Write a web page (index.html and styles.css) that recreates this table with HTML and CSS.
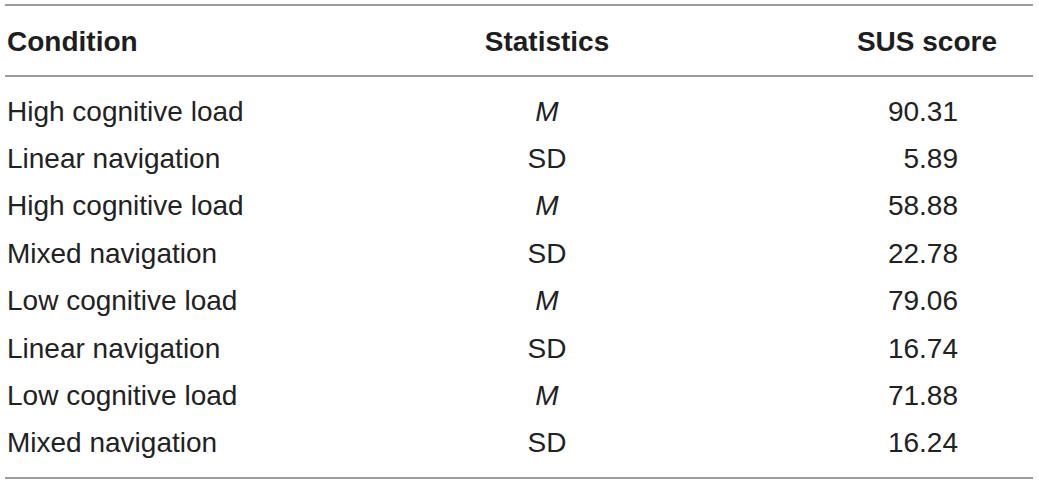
FILE: index.html
```html
<!DOCTYPE html>
<html lang="en">
<head>
<meta charset="utf-8">
<title>SUS scores</title>
<link rel="stylesheet" href="styles.css">
</head>
<body>
<div class="table">
  <div class="row head">
    <div class="c1">Condition</div>
    <div class="c2">Statistics</div>
    <div class="c3 hdr">SUS score</div>
  </div>
  <div class="body">
    <div class="row"><div class="c1">High cognitive load</div><div class="c2"><i>M</i></div><div class="c3">90.31</div></div>
    <div class="row"><div class="c1">Linear navigation</div><div class="c2">SD</div><div class="c3">5.89</div></div>
    <div class="row"><div class="c1">High cognitive load</div><div class="c2"><i>M</i></div><div class="c3">58.88</div></div>
    <div class="row"><div class="c1">Mixed navigation</div><div class="c2">SD</div><div class="c3">22.78</div></div>
    <div class="row"><div class="c1">Low cognitive load</div><div class="c2"><i>M</i></div><div class="c3">79.06</div></div>
    <div class="row"><div class="c1">Linear navigation</div><div class="c2">SD</div><div class="c3">16.74</div></div>
    <div class="row"><div class="c1">Low cognitive load</div><div class="c2"><i>M</i></div><div class="c3">71.88</div></div>
    <div class="row"><div class="c1">Mixed navigation</div><div class="c2">SD</div><div class="c3">16.24</div></div>
  </div>
</div>
</body>
</html>
```
FILE: styles.css
```css
html, body {
  margin: 0;
  padding: 0;
  background: #ffffff;
}
body {
  font-family: "Liberation Sans", Arial, sans-serif;
  font-size: 28px;
  color: #222222;
}
.table {
  margin: 4px 0 0 5px;
  width: 1028px;
  border-top: 2px solid #9c9c9c;
  border-bottom: 2px solid #9c9c9c;
}
.row {
  display: grid;
  grid-template-columns: 400px 284px 344px;
  align-items: center;
  height: 47.4px;
}
.head {
  height: 67px;
  padding-top: 2px;
  border-bottom: 2px solid #9c9c9c;
  font-weight: bold;
  color: #1e1e1e;
}
.body {
  padding: 11px 0 10px;
}
.c1 {
  padding-left: 2px;
  white-space: nowrap;
}
.c2 {
  text-align: center;
}
.c3 {
  text-align: right;
  padding-right: 75px;
}
.c3.hdr {
  padding-right: 36px;
}
```
